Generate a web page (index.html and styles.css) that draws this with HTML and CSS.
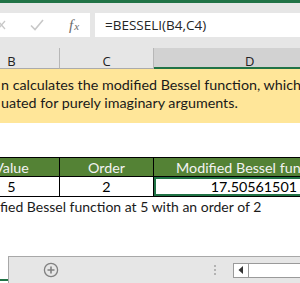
FILE: index.html
```html
<!DOCTYPE html>
<html>
<head>
<meta charset="utf-8">
<link rel="stylesheet" href="styles.css">
</head>
<body>
<div class="app">
  <div class="topbar"></div>
  <div class="formula">
    <div class="iconbox">
      <svg class="ico-x" width="8" height="10" viewBox="0 0 8 10"><path d="M-2 1 L5 9 M5 1 L-2 9" stroke="#c8c8c8" stroke-width="1.3" fill="none"/></svg>
      <svg class="ico-check" width="14" height="12" viewBox="0 0 14 12"><path d="M1 6.5 L5 10.5 L13 1" stroke="#c8c8c8" stroke-width="1.6" fill="none"/></svg>
      <span class="fx"><i>f</i><i class="x">x</i></span>
    </div>
    <div class="fbox">=BESSELI(B4,C4)</div>
  </div>
  <div class="colhead">
    <div class="ch">B</div>
    <div class="ch">C</div>
    <div class="ch sel">D</div>
  </div>
  <div class="note">
    <div>n calculates the modified Bessel function, which</div>
    <div>uated for purely imaginary arguments.</div>
  </div>
  <div class="gap"></div>
  <div class="tbl">
    <div class="th">Value</div>
    <div class="th">Order</div>
    <div class="th left">Modified Bessel function</div>
    <div class="td">5</div>
    <div class="td">2</div>
    <div class="td num active">17.50561501</div>
  </div>
  <div class="caption">fied Bessel function at 5 with an order of 2</div>
  <div class="spacer"></div>
  <div class="tabs">
    <div class="tableft"></div>
    <div class="tabbar">
      <svg class="plus" width="16" height="16" viewBox="0 0 16 16"><circle cx="8" cy="8" r="6.6" stroke="#808080" stroke-width="1.3" fill="none"/><path d="M8 4.5 V11.5 M4.5 8 H11.5" stroke="#808080" stroke-width="1.6"/></svg>
      <div class="dots"><span></span><span></span><span></span></div>
      <div class="scroll">
        <div class="arrow"><svg width="6" height="8" viewBox="0 0 6 8"><path d="M5 0 L0.5 4 L5 8 Z" fill="#333"/></svg></div>
        <div class="track"></div>
      </div>
    </div>
  </div>
</div>
</body>
</html>
```
FILE: styles.css
```css
* { box-sizing: border-box; }
html, body { margin: 0; padding: 0; }
body { width: 300px; height: 283px; overflow: hidden; background: #fff; }
.app { width: 300px; height: 283px; overflow: hidden; font-family: Lato, "Open Sans", sans-serif; }

.topbar { height: 3px; background: #217346; }

.formula {
  height: 45px;
  background: #e6e6e6;
  display: flex;
  align-items: flex-start;
  padding-top: 10px;
  gap: 5px;
}
.iconbox {
  width: 90px; height: 24px; background: #fff;
  display: flex; align-items: center; position: relative;
}
.ico-x { margin-left: 0; }
.ico-check { margin-left: 22px; }
.fx {
  margin-left: 25px;
  font-family: "Liberation Serif", serif;
  font-size: 15px; color: #6b6b6b;
  display: flex; align-items: baseline;
}
.fx .x { font-size: 11px; margin-left: 1px; }
.fbox {
  flex: 1; height: 24px; background: #fff;
  font-family: "Open Sans", sans-serif;
  font-size: 13.5px; color: #262626;
  line-height: 24px; padding-left: 10px;
  white-space: nowrap;
}

.colhead {
  height: 21px;
  display: grid;
  grid-template-columns: 96px 94px 160px;
  margin-left: -36px;
  background: #e6e6e6;
}
.ch {
  border-right: 1px solid #b7b7b7;
  border-bottom: 1px solid #ababab;
  text-align: center;
  font-family: "Open Sans", sans-serif;
  font-size: 13px; color: #222;
  line-height: 26px;
  overflow: hidden;
  height: 21px;
}
.ch.sel { background: #d2d2d2; border-bottom: 2px solid #217346; text-align: left; padding-left: 91px; }

.note {
  height: 54px;
  background: #ffe699;
  padding-top: 7px;
  font-size: 14.3px; line-height: 18px; color: #1a1a1a;
  white-space: nowrap;
  padding-left: 1px;
}
.gap { height: 34px; }

.tbl {
  display: grid;
  grid-template-columns: 96px 94px 160px;
  margin-left: -36px;
  font-size: 14.3px;
}
.th, .td {
  border-right: 1px solid #000;
  border-bottom: 1px solid #000;
  height: 20px; line-height: 19px;
  text-align: center;
  white-space: nowrap; overflow: hidden;
}
.th { background: #548235; color: #f2f2f2; border-top: 1px solid #000; height: 20px; }
.th.left { text-align: left; padding-left: 22px; }
.td { height: 20px; color: #000; }
.td.num { text-align: right; padding-right: 16px; }
.td.active { box-shadow: inset 0 0 0 2px #217346; }

.caption {
  height: 19px;
  font-size: 14px; line-height: 19px; color: #1a1a1a;
  white-space: nowrap; padding-left: 0;
}
.spacer { height: 40px; }

.tabs { height: 27px; display: flex; }
.tableft { width: 8px; background: #fff; border-bottom: 2px solid #217346; margin-bottom: 2px; }
.tabbar {
  flex: 1; background: #e6e6e6;
  border-top: 1px solid #a8a8a8; border-left: 1px solid #a8a8a8;
  display: flex; align-items: center;
  position: relative;
}
.plus { margin-left: 34px; }
.dots { display: flex; flex-direction: column; gap: 2px; margin-left: 155px; }
.dots span { width: 2px; height: 2px; background: #b3b3b3; display: block; }
.scroll {
  margin-left: 17px; height: 15px; flex: 1;
  display: flex; border: 1px solid #9a9a9a; border-right: none; background: #fff;
  margin-top: 0;
}
.arrow { width: 15px; border-right: 1px solid #9a9a9a; display: flex; align-items: center; justify-content: center; }
.track { flex: 1; }
```
